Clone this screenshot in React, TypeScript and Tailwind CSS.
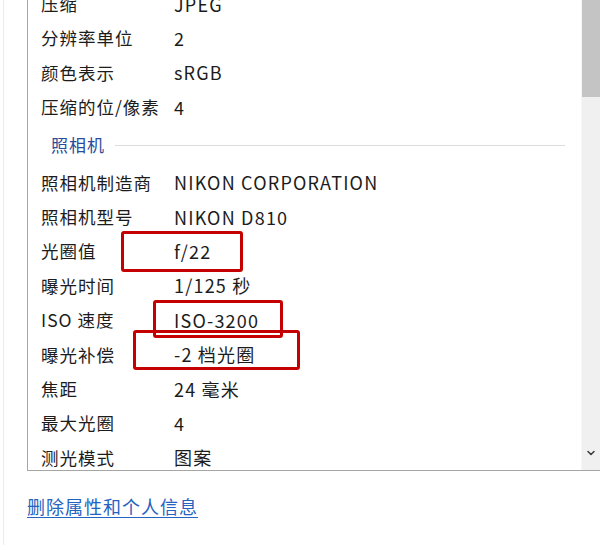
import { ChevronDown } from "lucide-react";

const before = [
  ["压缩", "JPEG"],
  ["分辨率单位", "2"],
  ["颜色表示", "sRGB"],
  ["压缩的位/像素", "4"],
];

const camera = [
  ["照相机制造商", "NIKON CORPORATION"],
  ["照相机型号", "NIKON D810"],
  ["光圈值", "f/22"],
  ["曝光时间", "1/125 秒"],
  ["ISO 速度", "ISO-3200"],
  ["曝光补偿", "-2 档光圈"],
  ["焦距", "24 毫米"],
  ["最大光圈", "4"],
  ["测光模式", "图案"],
];

const font = "font-['Noto_Sans_CJK_SC','Noto_Sans',sans-serif]";

function Row({ label, value }: { label: string; value: string }) {
  return (
    <div className="flex h-[34.4px] shrink-0 items-center pl-[13px] text-[17.5px] tracking-[1px] text-[#1c1c1c]">
      <span className="w-[133px] shrink-0 whitespace-nowrap">{label}</span>
      <span className="whitespace-nowrap text-[18px] tracking-[1.2px]">{value}</span>
    </div>
  );
}

export default function App() {
  return (
    <div className={`relative h-[545px] w-[600px] overflow-hidden bg-white ${font}`}>
      <div className="ml-[3px] flex h-full border-l border-[#ececec]">
        <div className="flex w-full flex-col">
          <div className="ml-[23px] flex h-[471px] shrink-0 border-b border-l border-[#a6a6a6]">
            <div className="flex flex-1 flex-col overflow-hidden">
              <div className="-mt-[13px] flex flex-col">
                {before.map(([l, v]) => (
                  <Row key={l} label={l} value={v} />
                ))}
                <div className="flex h-[41px] shrink-0 items-center gap-[10px] pl-[23px] pr-[16px]">
                  <span className="text-[17px] tracking-[1px] text-[#2a4c9c]">照相机</span>
                  <div className="h-px flex-1 bg-[#dcdcdc]" />
                </div>
                {camera.map(([l, v]) => (
                  <Row key={l} label={l} value={v} />
                ))}
              </div>
            </div>
            <div className="flex w-[19px] shrink-0 flex-col border-l border-[#f6f6f6] bg-[#f0f0f0]">
              <div className="h-[97px] bg-[#c4c4c4]" />
              <div className="flex-1" />
              <div className="flex h-[26px] items-start justify-center pt-[3px]">
                <ChevronDown size={12} strokeWidth={3} className="text-[#3a3a3a]" />
              </div>
            </div>
          </div>
          <div className="ml-[23px] mt-[22px]">
            <span className="text-[18px] tracking-[1px] text-[#2563c0] underline decoration-[#2563c0] underline-offset-[3px]">
              删除属性和个人信息
            </span>
          </div>
        </div>
      </div>

      <div className="absolute left-[121px] top-[231px] h-[41px] w-[122px] rounded-[3px] border-[3px] border-[#c40000]" />
      <div className="absolute left-[153px] top-[300px] h-[38px] w-[130px] rounded-[3px] border-[3px] border-[#c40000]" />
      <div className="absolute left-[133px] top-[330px] h-[40px] w-[167px] rounded-[3px] border-[3px] border-[#c40000]" />
    </div>
  );
}
